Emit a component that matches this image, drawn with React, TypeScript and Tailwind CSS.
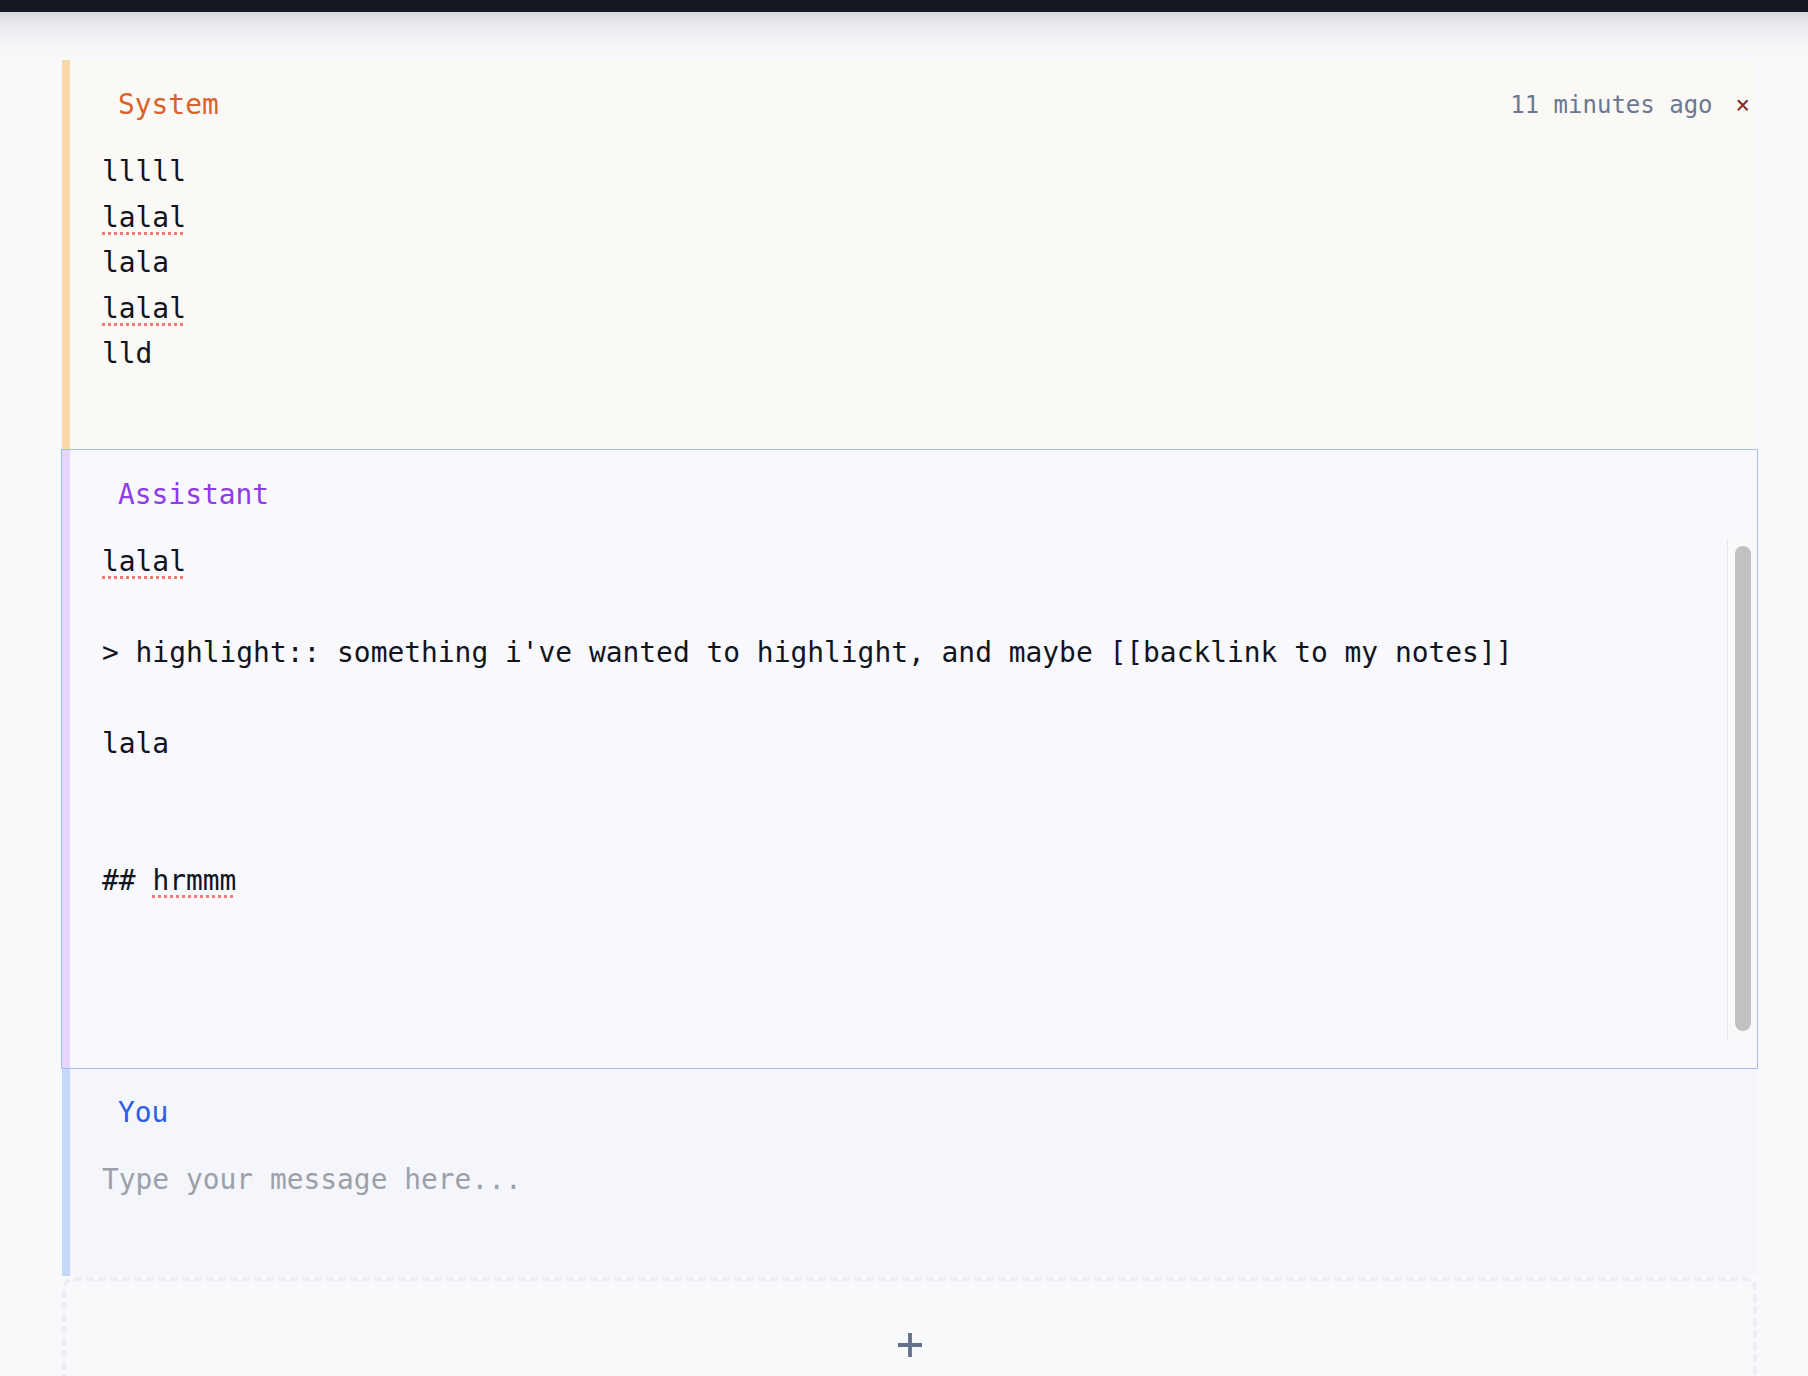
import React from "react";

const mono = "font-['DejaVu_Sans_Mono','Liberation_Mono',monospace]";

function Spell({ children }: { children: React.ReactNode }) {
  return (
    <span className="underline decoration-dotted decoration-[#f17b74] decoration-[3px] underline-offset-[5px]">
      {children}
    </span>
  );
}

function Header({
  label,
  color,
  right,
}: {
  label: string;
  color: string;
  right?: React.ReactNode;
}) {
  return (
    <div className="flex h-[40px] items-center justify-between">
      <span className={`pl-[16px] text-[27.9px] leading-[40px] ${color}`}>{label}</span>
      {right}
    </div>
  );
}

export default function App() {
  return (
    <div className={`min-h-screen bg-[#f8f9fb] ${mono}`}>
      <div className="h-[12px] bg-[#141821]" />
      <div className="h-[48px] bg-[linear-gradient(to_bottom,#d8d9dd,#eceef1_35%,#f5f6f8_70%,#f8f9fb)]" />

      <div className="ml-[62px] mr-[51px] flex flex-col">
        {/* System */}
        <div className="flex flex-col border-l-8 border-[#f9d8ac] bg-[#faf9f6] pl-[32px] pt-[25px] pb-[29px]">
          <Header
            label="System"
            color="text-[#dc602c]"
            right={
              <div className="flex items-center gap-[23px] pr-[7px]">
                <span className="text-[24px] leading-[40px] text-[#6b7891]">11 minutes ago</span>
                <span className="text-[24px] leading-[40px] text-[#86281f]">×</span>
              </div>
            }
          />
          <div className="mt-[24px] h-[272px] whitespace-pre text-[27.9px] leading-[45.5px] text-[#0f1420]">
            <div>lllll</div>
            <div>
              <Spell>lalal</Spell>
            </div>
            <div>lala</div>
            <div>
              <Spell>lalal</Spell>
            </div>
            <div>lld</div>
          </div>
        </div>

        {/* Assistant */}
        <div className="relative z-10 flex flex-col border-l-8 border-[#e6d6fc] bg-[#f8f8fd] pl-[32px] pt-[25px] pb-[29px] outline outline-1 outline-[#a3bff1]">
          <Header label="Assistant" color="text-[#8f3be8]" />
          <div className="mt-[24px] flex h-[500px]">
            <div className="flex-1 overflow-hidden whitespace-pre text-[27.9px] leading-[45.5px] text-[#0f1420]">
              <div>
                <Spell>lalal</Spell>
              </div>
              <div>{"\u00a0"}</div>
              <div>{"> highlight:: something i've wanted to highlight, and maybe [[backlink to my notes]]"}</div>
              <div>{"\u00a0"}</div>
              <div>lala</div>
              <div>{"\u00a0"}</div>
              <div>{"\u00a0"}</div>
              <div>
                {"## "}
                <Spell>hrmmm</Spell>
              </div>
            </div>
            <div className="flex w-[30px] flex-col border-l border-[#e6e6e6] bg-[#f9f9f9] pl-[7px] pr-[6px] pt-[7px] pb-[8px]">
              <div className="flex-1 rounded-full bg-[#c1c1c1]" />
            </div>
          </div>
        </div>

        {/* You */}
        <div className="flex flex-col border-l-8 border-[#c3d8fa] bg-[#f4f6fb] pl-[32px] pt-[25px] pb-[29px]">
          <Header label="You" color="text-[#2d5ee2]" />
          <div className="mt-[24px] h-[90px] whitespace-pre text-[27.9px] leading-[45.5px] text-[#9ca0a9]">
            Type your message here...
          </div>
        </div>

        {/* Add */}
        <div className="mt-[1px] flex justify-center rounded-[12px] border-4 border-dashed border-[#eceef3] pt-[52px] pb-[56px]">
          <svg width="24" height="24" viewBox="0 0 24 24" className="block">
            <path d="M0 12H24M12 0V24" stroke="#64718a" strokeWidth="3.8" fill="none" />
          </svg>
        </div>
      </div>
    </div>
  );
}
